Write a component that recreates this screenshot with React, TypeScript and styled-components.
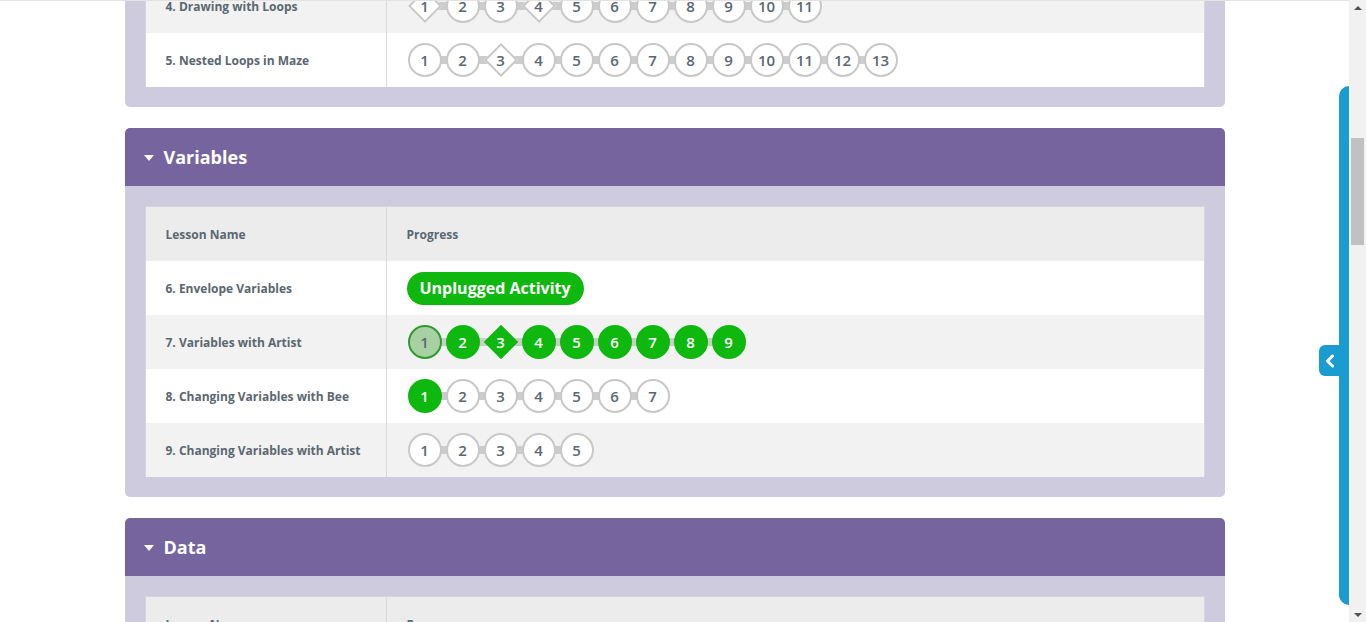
import { useLayoutEffect, useRef } from "react";
import styled, { createGlobalStyle, css } from "styled-components";

const GlobalStyle = createGlobalStyle`
  html, body {
    margin: 0;
    padding: 0;
    height: 100%;
    overflow: hidden;
    background: #ffffff;
  }
  body {
    font-family: "Open Sans", "Liberation Sans", sans-serif;
    color: #5b6770;
  }
`;

type Status = "none" | "attempted" | "done";
type Level = { n: number; kind?: "diamond"; status?: Status };

type Lesson = {
  name: string;
  levels?: Level[];
  unplugged?: boolean;
};

type Stage = {
  title: string;
  lessons: Lesson[];
};

const lv = (count: number, extra: Record<number, Partial<Level>> = {}): Level[] =>
  Array.from({ length: count }, (_, i) => ({ n: i + 1, ...(extra[i + 1] ?? {}) }));

const stages: Stage[] = [
  {
    title: "Loops",
    lessons: [
      { name: "4. Drawing with Loops", levels: lv(11, { 1: { kind: "diamond" }, 4: { kind: "diamond" } }) },
      { name: "5. Nested Loops in Maze", levels: lv(13, { 3: { kind: "diamond" } }) },
    ],
  },
  {
    title: "Variables",
    lessons: [
      { name: "6. Envelope Variables", unplugged: true },
      {
        name: "7. Variables with Artist",
        levels: lv(9, {
          1: { status: "attempted" },
          2: { status: "done" },
          3: { status: "done", kind: "diamond" },
          4: { status: "done" },
          5: { status: "done" },
          6: { status: "done" },
          7: { status: "done" },
          8: { status: "done" },
          9: { status: "done" },
        }),
      },
      { name: "8. Changing Variables with Bee", levels: lv(7, { 1: { status: "done" } }) },
      { name: "9. Changing Variables with Artist", levels: lv(5) },
    ],
  },
  {
    title: "Data",
    lessons: [{ name: "10. Data Collection", levels: lv(6) }],
  },
];

const Frame = styled.div`
  display: flex;
  height: 622px;
  width: 100%;
`;

const Main = styled.div`
  flex: 1;
  height: 100%;
  overflow-y: auto;
  scrollbar-width: none;
  &::-webkit-scrollbar {
    display: none;
  }
`;

const Content = styled.div`
  width: 1100px;
  margin: 0 auto;
  padding: 20px 0 40px;
`;

const SectionBox = styled.section`
  margin-bottom: 21px;
`;

const SectionHeader = styled.div`
  display: flex;
  align-items: center;
  gap: 10px;
  height: 58px;
  padding-left: 19px;
  background: #76649e;
  border-radius: 5px 5px 0 0;
  color: #ffffff;
  font-size: 18px;
  font-weight: 700;
`;

const Caret = styled.span`
  width: 0;
  height: 0;
  border-left: 5.5px solid transparent;
  border-right: 5.5px solid transparent;
  border-top: 6px solid #ffffff;
  margin-top: 1px;
`;

const SectionBody = styled.div`
  background: #cfcbdf;
  padding: 20px;
  border-radius: 0 0 5px 5px;
`;

const Table = styled.div`
  border: 1px solid #d6d4dc;
  border-bottom: none;
`;

const Row = styled.div<{ $tone: "head" | "odd" | "even" }>`
  display: grid;
  grid-template-columns: 241px 1fr;
  height: 54px;
  background: ${(p) => (p.$tone === "head" ? "#ececec" : p.$tone === "odd" ? "#ffffff" : "#f2f2f2")};
`;

const NameCell = styled.div`
  display: flex;
  align-items: center;
  padding-left: 20px;
  border-right: 1px solid #dadada;
  font-size: 12px;
  font-weight: 700;
  color: #5b6770;
`;

const ProgressCell = styled.div`
  display: flex;
  align-items: center;
  padding-left: 20px;
  font-size: 12px;
  font-weight: 700;
  color: #5b6770;
`;

const Track = styled.div`
  position: relative;
  display: inline-flex;
  gap: 4px;
  margin-left: 1px;
  &::before {
    content: "";
    position: absolute;
    left: 17px;
    right: 17px;
    top: 13px;
    height: 8px;
    background: #cccccc;
  }
`;

const bubbleColors = {
  none: css`
    background: #ffffff;
    border-color: #c8c8c8;
    color: #5b6770;
  `,
  attempted: css`
    background: #a7d1a3;
    border-color: #2f9b2f;
    color: #5b6770;
  `,
  done: css`
    background: #0eb80e;
    border-color: #0eb80e;
    color: #ffffff;
  `,
};

const Bubble = styled.div<{ $status: Status }>`
  position: relative;
  z-index: 1;
  box-sizing: border-box;
  width: 34px;
  height: 34px;
  border-radius: 50%;
  border: 2px solid;
  display: flex;
  align-items: center;
  justify-content: center;
  font-size: 15px;
  font-weight: 600;
  ${(p) => bubbleColors[p.$status]}
`;

const DiamondSlot = styled.div<{ $status: Status }>`
  position: relative;
  z-index: 1;
  width: 34px;
  height: 34px;
  display: flex;
  align-items: center;
  justify-content: center;
  font-size: 15px;
  font-weight: 600;
  color: ${(p) => (p.$status === "done" ? "#ffffff" : "#5b6770")};
  &::before {
    content: "";
    position: absolute;
    left: 5px;
    top: 5px;
    box-sizing: border-box;
    width: 24px;
    height: 24px;
    border: 2px solid;
    transform: rotate(45deg);
    ${(p) => bubbleColors[p.$status]}
  }
`;

const DiamondLabel = styled.span`
  position: relative;
`;

const Pill = styled.div`
  display: inline-flex;
  align-items: center;
  height: 33px;
  padding: 0 13px;
  border-radius: 17px;
  background: #0eb80e;
  color: #ffffff;
  font-size: 16px;
  font-weight: 700;
`;

const Scrollbar = styled.div`
  width: 17px;
  height: 100%;
  background: #f1f1f1;
  display: flex;
  flex-direction: column;
  align-items: center;
`;

const Arrow = styled.div<{ $down?: boolean }>`
  width: 0;
  height: 0;
  margin: ${(p) => (p.$down ? "auto 0 5px" : "6px 0 0")};
  border-left: 4px solid transparent;
  border-right: 4px solid transparent;
  ${(p) => (p.$down ? "border-top: 4px solid #505050;" : "border-bottom: 4px solid #505050;")}
`;

const Thumb = styled.div`
  width: 13px;
  height: 107px;
  margin-top: 128px;
  background: #c1c1c1;
`;

const TopLine = styled.div`
  position: fixed;
  top: 0;
  left: 0;
  right: 17px;
  height: 1px;
  background: #e3e3e3;
  z-index: 5;
`;

const PanelEdge = styled.div`
  position: fixed;
  right: 17px;
  top: 86px;
  bottom: 17px;
  width: 10px;
  background: #1b9cd0;
  border-radius: 10px 0 0 10px;
  z-index: 5;
`;

const PanelTab = styled.div`
  position: fixed;
  right: 25px;
  top: 345px;
  width: 22px;
  height: 31px;
  background: #1b9cd0;
  border-radius: 6px 0 0 6px;
  display: flex;
  align-items: center;
  justify-content: center;
  z-index: 6;
`;

function Level({ level }: { level: Level }) {
  const status = level.status ?? "none";
  if (level.kind === "diamond") {
    return (
      <DiamondSlot $status={status}>
        <DiamondLabel>{level.n}</DiamondLabel>
      </DiamondSlot>
    );
  }
  return <Bubble $status={status}>{level.n}</Bubble>;
}

function StageSection({ stage, anchor }: { stage: Stage; anchor?: React.Ref<HTMLDivElement> }) {
  const firstTone = stage.title === "Loops" ? "even" : "odd";
  const otherTone = firstTone === "odd" ? "even" : "odd";
  return (
    <SectionBox>
      <SectionHeader>
        <Caret />
        {stage.title}
      </SectionHeader>
      <SectionBody>
        <Table>
          <Row $tone="head">
            <NameCell>Lesson Name</NameCell>
            <ProgressCell>Progress</ProgressCell>
          </Row>
          {stage.lessons.map((lesson, idx) => (
            <Row key={lesson.name} $tone={idx % 2 === 0 ? firstTone : otherTone} ref={idx === 0 ? anchor : undefined}>
              <NameCell>{lesson.name}</NameCell>
              <ProgressCell>
                {lesson.unplugged ? (
                  <Pill>Unplugged Activity</Pill>
                ) : (
                  <Track>
                    {lesson.levels?.map((l) => (
                      <Level key={l.n} level={l} />
                    ))}
                  </Track>
                )}
              </ProgressCell>
            </Row>
          ))}
        </Table>
      </SectionBody>
    </SectionBox>
  );
}

export default function App() {
  const mainRef = useRef<HTMLDivElement>(null);
  const rowRef = useRef<HTMLDivElement>(null);

  // page is shown scrolled so the 4th lesson row is cut off at the top
  useLayoutEffect(() => {
    const main = mainRef.current;
    const row = rowRef.current;
    if (!main || !row) return;
    const offset = row.getBoundingClientRect().top - main.getBoundingClientRect().top + main.scrollTop;
    main.scrollTop = offset + 21;
  }, []);

  return (
    <>
      <GlobalStyle />
      <TopLine />
      <Frame>
        <Main ref={mainRef}>
          <Content>
            {stages.map((s, i) => (
              <StageSection key={s.title} stage={s} anchor={i === 0 ? rowRef : undefined} />
            ))}
          </Content>
        </Main>
        <Scrollbar>
          <Arrow />
          <Thumb />
          <Arrow $down />
        </Scrollbar>
      </Frame>
      <PanelEdge />
      <PanelTab>
        <svg width="10" height="14" viewBox="0 0 10 14">
          <path d="M7.5 2 L2.5 7 L7.5 12" fill="none" stroke="#ffffff" strokeWidth="3" strokeLinecap="round" strokeLinejoin="round" />
        </svg>
      </PanelTab>
    </>
  );
}
